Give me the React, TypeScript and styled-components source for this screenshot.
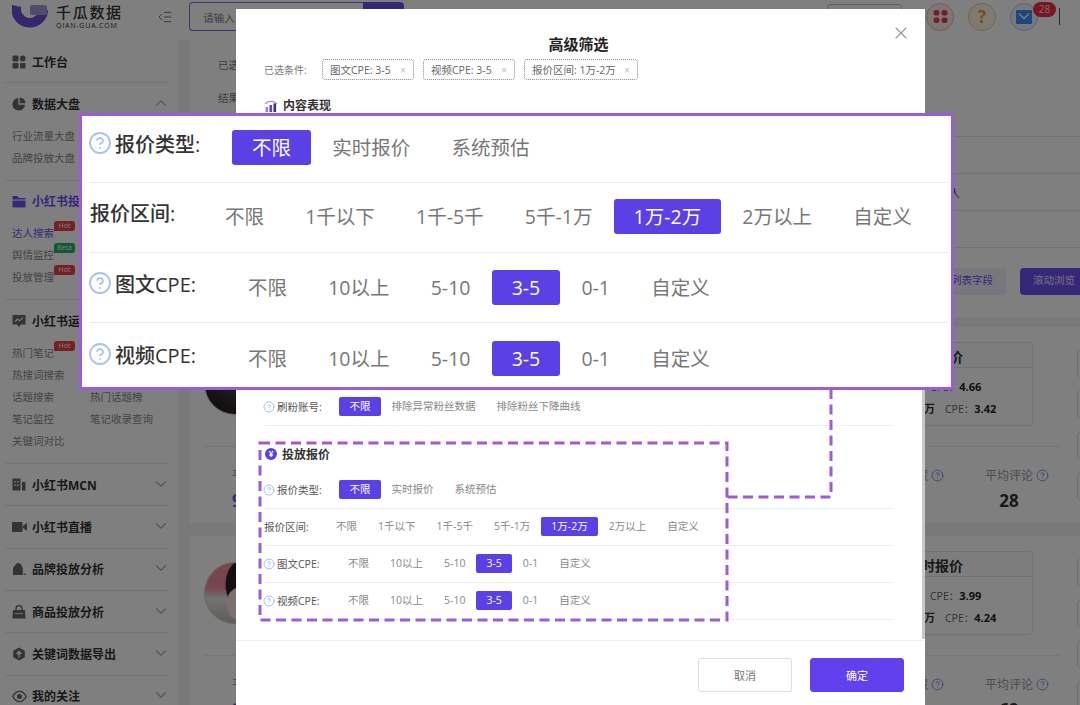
import React from 'react'
import styled, { createGlobalStyle } from 'styled-components'
import { ChevronDown, ChevronUp, CircleHelp, IndentDecrease, X } from 'lucide-react'

const PURPLE = '#5b40e6'
const ACCENT = '#9a5dd5'

const GlobalStyle = createGlobalStyle`
  html, body {
    margin: 0;
    padding: 0;
    background: #f2f2f2;
    overflow: hidden;
  }
  * {
    box-sizing: border-box;
  }
  body {
    font-family: "Open Sans", "Noto Sans CJK SC", sans-serif;
  }
`

const Page = styled.div`
  position: relative;
  width: 1080px;
  height: 705px;
  overflow: hidden;
  background: #f2f2f2;
`

/* header */
const Header = styled.header`
  display: flex;
  align-items: center;
  height: 40px;
  padding: 0 20px 7px 12px;
  background: #fff;
`

const LogoText = styled.div`
  display: flex;
  flex-direction: column;
  margin-left: 8px;
  color: #333;
`

const LogoName = styled.span`
  font-size: 15px;
  line-height: 17px;
  font-weight: 500;
  letter-spacing: 1.7px;
`

const LogoSub = styled.span`
  font-size: 7px;
  line-height: 9px;
  letter-spacing: 0.8px;
`

const MenuToggle = styled.span`
  display: flex;
  margin-left: 34.4px;
  color: #777;
`

const Search = styled.div`
  display: flex;
  width: 215px;
  height: 29px;
  margin-left: 16px;
`

const SearchInput = styled.div`
  flex: 1;
  padding: 7px 13px;
  font-size: 10.5px;
  color: #777;
  border: 1px solid #7a62ee;
  border-right: 0;
  border-radius: 4px 0 0 4px;
`

const SearchButton = styled.div`
  width: 41px;
  background: #6c4ef0;
  border-radius: 0 4px 4px 0;
`

const HeaderRight = styled.div`
  display: flex;
  align-items: center;
  gap: 14px;
  margin-left: auto;
`

const OutlineBox = styled.div`
  width: 75px;
  height: 25px;
  margin-right: 10px;
  border: 1px solid #bbb;
  border-radius: 4px;
`

const IconCircle = styled.div<{ $tint: string; $line: string }>`
  position: relative;
  display: flex;
  align-items: center;
  justify-content: center;
  width: 28px;
  height: 28px;
  border-radius: 50%;
  background: ${(p) => p.$tint};
  border: 1px solid ${(p) => p.$line};
`

const Question = styled.span`
  font-size: 17px;
  line-height: 1;
  font-weight: 700;
  color: #f39a2c;
`

const Badge = styled.span`
  position: absolute;
  top: -2px;
  left: 22px;
  width: 23px;
  height: 15px;
  border-radius: 8px;
  background: #ee2a40;
  color: #ffd9dd;
  font-size: 10px;
  line-height: 15px;
  text-align: center;
`

const HeaderRule = styled.span`
  width: 1px;
  height: 17px;
  margin-left: 7px;
  background: #555;
`

/* sidebar */
const Body = styled.div`
  display: flex;
  height: 665px;
`

const Sidebar = styled.aside`
  flex: 0 0 178px;
  padding: 1px 10px 0 5px;
  background: #fff;
`

const SideGroup = styled.section`
  border-bottom: 1px solid #e8e8e8;
`

const SideTitle = styled.div<{ $active?: boolean }>`
  display: flex;
  align-items: center;
  height: 41.3px;
  padding: 0 0 0 7px;
  font-size: 12px;
  font-weight: 700;
  color: ${(p) => (p.$active ? '#6c4ef0' : '#333')};
`

const SideIcon = styled.span`
  display: flex;
  width: 20px;
  color: #666;
`

const SideChevron = styled.span`
  display: flex;
  margin: -2px -2px 0 auto;
  color: #aaa;
`

const SideLinks = styled.div`
  display: grid;
  grid-template-columns: 78px 1fr;
  padding: 0 0 10.7px 7px;
`

const SideLink = styled.a<{ $active?: boolean; $full?: boolean }>`
  position: relative;
  grid-column: ${(p) => (p.$full ? '1 / 3' : 'auto')};
  height: 22.2px;
  font-size: 10.5px;
  line-height: 22px;
  white-space: nowrap;
  color: ${(p) => (p.$active ? '#6c4ef0' : '#888')};
`

const SideTag = styled.span<{ $color: string }>`
  position: absolute;
  left: 42px;
  top: -1px;
  width: 21px;
  height: 10px;
  border-radius: 3px 3px 3px 0;
  background: ${(p) => p.$color};
  color: #fff;
  font-size: 7px;
  line-height: 10px;
  text-align: center;
`

/* main list behind the dialog */
const Main = styled.main`
  flex: 1;
  min-width: 0;
  padding-left: 12px;
`

const FilterPanel = styled.div`
  height: 277px;
  margin-bottom: 10px;
  background: #fff;
`

const PanelRow = styled.div<{ $height: number }>`
  display: flex;
  align-items: center;
  height: ${(p) => p.$height}px;
  padding-left: 28px;
  font-size: 10.5px;
  color: #777;
`

const PanelLines = styled.div`
  margin-top: 30px;
  padding-left: 28px;
`

const PanelLine = styled.div`
  display: flex;
  justify-content: flex-end;
  height: 37px;
  padding-right: 120px;
  font-size: 11px;
  line-height: 40px;
  color: #444;
  border-top: 1px solid #e6e6e6;
`

const Toolbar = styled.div`
  display: flex;
  justify-content: flex-end;
  gap: 14px;
  padding-top: 20px;
  border-top: 1px solid #e6e6e6;
`

const ToolButton = styled.div<{ $primary?: boolean }>`
  width: ${(p) => (p.$primary ? '60px' : '66px')};
  height: 27px;
  padding-left: ${(p) => (p.$primary ? '13px' : '11px')};
  font-size: 10.5px;
  line-height: 25px;
  color: ${(p) => (p.$primary ? '#e6e0ff' : '#6c4ef0')};
  background: ${(p) => (p.$primary ? '#6c4ef0' : '#f0eefb')};
  border-radius: ${(p) => (p.$primary ? '4px 0 0 4px' : '4px')};
`

const Card = styled.article`
  display: flex;
  height: 196px;
  margin-bottom: 13px;
  padding: 16px 0 0 14px;
  background: #fff;
`

const CardBody = styled.div`
  flex: 0 0 856px;
`

const CardTop = styled.div`
  display: flex;
  align-items: center;
  justify-content: space-between;
  height: 104px;
  padding: 0 27px 21px 0;
  border-bottom: 1px solid #ececec;
`

const Avatar = styled.div<{ $girl?: boolean }>`
  width: 62px;
  height: 62px;
  border-radius: 50%;
  border: 1px solid #ccc;
  background: ${(p) =>
    p.$girl
      ? `radial-gradient(ellipse 14px 17px at 58% 68%, #f6e2d8 92%, transparent 100%),
         radial-gradient(ellipse 16px 25px at 60% 36%, #2a1f22 92%, transparent 100%),
         linear-gradient(180deg, #f08a9c 0 40%, #e4e6e0 60%, #bcbcb4 100%)`
      : `radial-gradient(circle at 60% 30%, #5a4a4c, #2a2226 70%)`};
`

const PriceBox = styled.div`
  width: 138px;
  height: 84px;
  border: 1px solid #e4e4e4;
  border-radius: 4px;
`

const PriceTitle = styled.div`
  height: 25px;
  padding-left: 11px;
  font-size: 14px;
  line-height: 27px;
  font-weight: 700;
  color: #333;
  background: #fafafa;
  border-bottom: 1px solid #e4e4e4;
  white-space: nowrap;
`

const PriceRows = styled.div`
  padding-top: 8px;
`

const PriceRow = styled.div`
  display: flex;
  height: 22px;
  padding-left: 11px;
  font-size: 10.5px;
  line-height: 22px;
  white-space: nowrap;
  color: #666;
`

const PriceAmount = styled.span<{ $width: number }>`
  width: ${(p) => p.$width}px;
  margin-right: 10px;
  font-size: 11px;
  font-weight: 700;
  color: #333;
  text-align: right;
`

const PriceValue = styled.b`
  font-size: 11px;
  color: #222;
`

const Stats = styled.div`
  display: flex;
  justify-content: space-between;
  padding: 20px 11px 0 28px;
`

const Stat = styled.div`
  display: flex;
  flex-direction: column;
`

const StatPair = styled.div`
  display: flex;
  gap: 41px;
`

const StatLabel = styled.div`
  display: flex;
  align-items: center;
  gap: 3px;
  height: 16px;
  font-size: 12px;
  color: #999;
  white-space: nowrap;
  svg {
    color: #5f87e8;
  }
`

const StatValue = styled.div<{ $accent?: boolean }>`
  padding-right: ${(p) => (p.$accent ? 0 : 16)}px;
  font-size: 17px;
  line-height: 25px;
  margin-top: 5px;
  font-weight: 700;
  text-align: ${(p) => (p.$accent ? 'left' : 'center')};
  color: ${(p) => (p.$accent ? '#6c4ef0' : '#333')};
`

const Actions = styled.div`
  display: flex;
  flex-direction: column;
  gap: 14px;
  margin: 7px 0 0 17px;
`

const ActionStub = styled.div`
  width: 60px;
  height: 27px;
  border: 1px solid #ddd;
  border-radius: 3px;
`

/* dimming layer and dialog */
const Overlay = styled.div`
  position: absolute;
  inset: 0;
  background: rgba(0, 0, 0, 0.5);
`

const Modal = styled.div`
  position: absolute;
  top: 9px;
  left: 236px;
  display: flex;
  flex-direction: column;
  width: 689px;
  height: 696px;
  background: #fff;
`

const CloseButton = styled.span`
  position: absolute;
  top: 14px;
  right: 14px;
  display: flex;
  color: #999;
`

const ModalScroll = styled.div`
  position: absolute;
  top: 200px;
  right: 0;
  width: 3px;
  height: 430px;
  background: #c8c8c8;
`

const ModalContent = styled.div`
  flex: 1;
  min-height: 0;
  padding: 25px 32px 0 28px;
`

const ModalTitle = styled.h2`
  margin: 0 0 5px;
  font-size: 15px;
  line-height: 20px;
  font-weight: 700;
  text-align: center;
  color: #222;
`

const SelectedRow = styled.div`
  display: flex;
  align-items: center;
  height: 21px;
  margin-bottom: 16px;
  font-size: 10px;
  color: #777;
`

const SelectedLabel = styled.span`
  width: 58px;
`

const SelectedTag = styled.span<{ $width: number }>`
  display: flex;
  align-items: center;
  justify-content: space-between;
  width: ${(p) => p.$width}px;
  height: 21px;
  margin-right: 9px;
  padding: 0 7px;
  font-size: 10.5px;
  color: #666;
  white-space: nowrap;
  border: 1px dotted #888;
  border-radius: 3px;
`

const TagClose = styled.span`
  font-size: 10px;
  color: #bbb;
`

const Section = styled.div<{ $height?: number }>`
  min-height: ${(p) => (p.$height ? `${p.$height}px` : 'auto')};
`

const SectionTitle = styled.h3<{ $top?: number }>`
  display: flex;
  align-items: center;
  gap: 5px;
  height: 18px;
  margin: ${(p) => p.$top ?? 0}px 0 ${(p) => (p.$top ? 9 : 0)}px;
  font-size: 12px;
  font-weight: 700;
  color: #333;
`

const YenDot = styled.span`
  width: 12px;
  height: 12px;
  margin-left: 1px;
  border-radius: 50%;
  background: ${PURPLE};
  color: #fff;
  font-size: 8px;
  line-height: 12px;
  text-align: center;
`

const FilterRow = styled.div`
  display: flex;
  align-items: center;
  height: 37px;
  padding-bottom: 1px;
  border-bottom: 1px solid #eee;
`

const FilterLabel = styled.div<{ $width: number }>`
  display: flex;
  align-items: center;
  gap: 2px;
  flex: 0 0 ${(p) => p.$width}px;
  font-size: 10.5px;
  color: #555;
  white-space: nowrap;
  svg {
    margin-left: -1px;
    color: #8fb0ea;
  }
`

const Options = styled.div`
  display: flex;
`

const Option = styled.span<{ $active?: boolean }>`
  height: 19px;
  padding: 0 10.5px;
  font-size: 10.5px;
  line-height: 19px;
  white-space: nowrap;
  border-radius: 2px;
  color: ${(p) => (p.$active ? '#fff' : '#888')};
  background: ${(p) => (p.$active ? PURPLE : 'transparent')};
`

const ModalFooter = styled.div`
  display: flex;
  justify-content: flex-end;
  gap: 18px;
  height: 65px;
  padding: 17px 21px 0 0;
  border-top: 1px solid #f0f0f0;
`

const FooterButton = styled.button<{ $primary?: boolean }>`
  width: 94px;
  height: 34px;
  padding: 0;
  font-family: inherit;
  font-size: 11px;
  border-radius: 3px;
  color: ${(p) => (p.$primary ? '#fff' : '#777')};
  background: ${(p) => (p.$primary ? '#6340ee' : '#fff')};
  border: 1px solid ${(p) => (p.$primary ? '#6340ee' : '#ddd')};
`

/* annotations drawn over the dialog */
const DashMark = styled.svg<{ $left: number; $top: number }>`
  position: absolute;
  left: ${(p) => p.$left}px;
  top: ${(p) => p.$top}px;
  overflow: visible;
  fill: none;
  stroke: ${ACCENT};
  stroke-width: 3;
  stroke-dasharray: 10 5.5;
`

const Callout = styled.div`
  position: absolute;
  left: 79px;
  top: 113px;
  width: 875px;
  height: 277px;
  padding: 0 3px 0 8px;
  background: #fff;
  border: 3px solid ${ACCENT};
`

const CalloutRow = styled.div<{ $top: number; $height: number; $last?: boolean }>`
  display: flex;
  align-items: flex-start;
  height: ${(p) => p.$height}px;
  padding-top: ${(p) => p.$top}px;
  border-bottom: ${(p) => (p.$last ? '0' : '1px solid #ececec')};
`

const CalloutLabel = styled.div<{ $width: number }>`
  display: flex;
  align-items: center;
  gap: 3px;
  flex: 0 0 ${(p) => p.$width}px;
  height: 26px;
  font-size: 20px;
  font-weight: 500;
  color: #333;
  white-space: nowrap;
  svg {
    margin-left: -2px;
    color: #a9c0f0;
  }
`

const CalloutOptions = styled.div`
  display: flex;
  gap: 1.2px;
`

const CalloutOption = styled.span<{ $active?: boolean }>`
  height: 35px;
  padding: 0 20px;
  font-size: 19.5px;
  line-height: 36px;
  white-space: nowrap;
  border-radius: 3px;
  color: ${(p) => (p.$active ? '#fff' : '#777')};
  background: ${(p) => (p.$active ? PURPLE : 'transparent')};
`

const LogoMark = () => (
  <svg width="36" height="32" viewBox="0 0 36 32">
    <path d="M4.6 5 A13.6 13.6 0 1 0 31.4 9" fill="none" stroke="#6f4cd8" strokeWidth="9.5" />
    <rect x="18" y="4" width="17" height="10" rx="2" fill="#a596e0" />
  </svg>
)

const GridDots = () => (
  <svg width="15" height="15" viewBox="0 0 15 15" fill="#e23a4c">
    <rect x="0.5" y="1" width="6" height="5.5" rx="2.5" />
    <rect x="8.5" y="1" width="6" height="5.5" rx="2.5" />
    <rect x="0.5" y="8.5" width="6" height="5.5" rx="2.5" />
    <rect x="8.5" y="8.5" width="6" height="5.5" rx="2.5" />
  </svg>
)

const Mail = () => (
  <svg width="16" height="14" viewBox="0 0 16 14">
    <rect width="16" height="14" rx="1" fill="#3a8cff" />
    <path d="M3 3.5 L8 8.5 L13 3.5" fill="none" stroke="#e6f0ff" strokeWidth="1.6" />
  </svg>
)

const icons: Record<string, React.ReactNode> = {
  desk: (
    <svg width="14" height="14" viewBox="0 0 14 14" fill="currentColor">
      <rect x="0.5" y="0.5" width="6" height="6" rx="1" />
      <rect x="8" y="0.5" width="5.5" height="6" rx="2.7" />
      <rect x="0.5" y="8" width="6" height="5.5" rx="1" />
      <rect x="8" y="8" width="5.5" height="5.5" rx="1" />
    </svg>
  ),
  pie: (
    <svg width="14" height="14" viewBox="0 0 14 14" fill="currentColor">
      <path d="M6.3 1 A6.3 6.3 0 1 0 13 7.7 H6.3 Z" />
      <path d="M7.7 0.5 A6 6 0 0 1 13.5 6.3 H7.7 Z" />
    </svg>
  ),
  folder: (
    <svg width="14" height="13" viewBox="0 0 14 13" fill="#6c4ef0">
      <path d="M0.5 1 H5.5 L7 3 H13.5 V4.6 H0.5 Z" />
      <path d="M0.5 5.6 H13.5 V12.4 H0.5 Z" />
    </svg>
  ),
  chat: (
    <svg width="14" height="14" viewBox="0 0 14 14">
      <path d="M0.5 1 H13.5 V10.6 H9 L7 13 L5 10.6 H0.5 Z" fill="currentColor" />
      <path d="M3 7.6 L5.6 5 L7.6 6.8 L11 3.6" fill="none" stroke="#fff" strokeWidth="1.1" />
    </svg>
  ),
  mcn: (
    <svg width="14" height="13" viewBox="0 0 14 13" fill="currentColor">
      <path d="M0.5 0.5 H8.5 V12.5 H0.5 Z M2.4 3 V4.6 H3.8 V3 Z M5 3 V4.6 H6.5 V3 Z M2.4 6.4 V8 H3.8 V6.4 Z M5 6.4 V8 H6.5 V6.4 Z" fillRule="evenodd" />
      <rect x="10" y="4" width="3.5" height="8.5" />
    </svg>
  ),
  video: (
    <svg width="15" height="12" viewBox="0 0 15 12" fill="currentColor">
      <rect x="0" y="1" width="10.5" height="10" rx="1" />
      <path d="M11 5 L15 2 V10 L11 7 Z" />
    </svg>
  ),
  brand: (
    <svg width="14" height="14" viewBox="0 0 14 14" fill="currentColor">
      <path d="M1 13 V6 L3 3.5 A3.4 3.4 0 0 1 9.6 3.5 L10.8 6 V13 Z" />
      <rect x="11.8" y="11.6" width="1.8" height="1.4" />
    </svg>
  ),
  goods: (
    <svg width="14" height="14" viewBox="0 0 14 14">
      <path d="M1 5 H13 L13.5 13.4 H0.5 Z" fill="currentColor" />
      <path d="M4 6 V3.6 A3 3 0 0 1 10 3.6 V6" fill="none" stroke="currentColor" strokeWidth="1.3" />
      <path d="M3 8.6 H11" stroke="#fff" strokeWidth="0.8" />
    </svg>
  ),
  upload: (
    <svg width="14" height="14" viewBox="0 0 14 14">
      <path d="M7 0.5 L12.8 3.8 V10.2 L7 13.5 L1.2 10.2 V3.8 Z" fill="currentColor" />
      <path d="M7 10.4 V5 M4.6 7 L7 4.6 L9.4 7" fill="none" stroke="#fff" strokeWidth="1.4" />
    </svg>
  ),
  eye: (
    <svg width="15" height="13" viewBox="0 0 15 13">
      <path d="M0.8 6.5 C3 2.4 5.2 1.4 7.5 1.4 S12 2.4 14.2 6.5 C12 10.6 9.8 11.6 7.5 11.6 S3 10.6 0.8 6.5 Z" fill="none" stroke="currentColor" strokeWidth="1.4" />
      <circle cx="7.5" cy="6.5" r="2.5" fill="currentColor" />
    </svg>
  ),
}

const ContentIcon = () => (
  <svg width="14" height="13" viewBox="0 0 14 13">
    <path d="M1 5 A8 8 0 0 1 13 5" fill="none" stroke="#7f7fe0" strokeWidth="1.1" />
    <rect x="1.5" y="8" width="2.6" height="5" fill="#8a8ae8" />
    <rect x="5.5" y="6" width="2.6" height="7" fill={PURPLE} />
    <rect x="9.5" y="4.5" width="2.6" height="8.5" fill="#3d2a9a" />
  </svg>
)

type SideEntry = { name: string; active?: boolean; tag?: 'Hot' | 'Beta'; full?: boolean }
type SideSection = { icon: string; title: string; active?: boolean; open?: boolean; links?: SideEntry[] }

const sideSections: SideSection[] = [
  { icon: 'desk', title: '工作台' },
  {
    icon: 'pie',
    title: '数据大盘',
    open: true,
    links: [
      { name: '行业流量大盘', full: true },
      { name: '品牌投放大盘', full: true },
    ],
  },
  {
    icon: 'folder',
    title: '小红书投放',
    active: true,
    open: true,
    links: [
      { name: '达人搜索', active: true, tag: 'Hot', full: true },
      { name: '舆情监控', tag: 'Beta', full: true },
      { name: '投放管理', tag: 'Hot', full: true },
    ],
  },
  {
    icon: 'chat',
    title: '小红书运营',
    open: true,
    links: [
      { name: '热门笔记', tag: 'Hot', full: true },
      { name: '热搜词搜索', full: true },
      { name: '话题搜索' },
      { name: '热门话题榜' },
      { name: '笔记监控' },
      { name: '笔记收录查询' },
      { name: '关键词对比', full: true },
    ],
  },
  { icon: 'mcn', title: '小红书MCN' },
  { icon: 'video', title: '小红书直播' },
  { icon: 'brand', title: '品牌投放分析' },
  { icon: 'goods', title: '商品投放分析' },
  { icon: 'upload', title: '关键词数据导出' },
  { icon: 'eye', title: '我的关注' },
]

const tagColor = { Hot: '#e8404a', Beta: '#22b060' }

type FilterOption = { text: string; active?: boolean }
const opts = (list: string[], active: string): FilterOption[] =>
  list.map((text) => ({ text, active: text === active }))

const priceTypes = opts(['不限', '实时报价', '系统预估'], '不限')
const priceRanges = opts(['不限', '1千以下', '1千-5千', '5千-1万', '1万-2万', '2万以上', '自定义'], '1万-2万')
const cpeOptions = opts(['不限', '10以上', '5-10', '3-5', '0-1', '自定义'], '3-5')

const filterRows = [
  { label: '报价类型:', help: true, start: 75, options: priceTypes },
  { label: '报价区间:', help: false, start: 61.5, options: priceRanges },
  { label: '图文CPE:', help: true, start: 73.5, options: cpeOptions },
  { label: '视频CPE:', help: true, start: 73.5, options: cpeOptions },
]

const calloutRows = [
  { ...filterRows[0], start: 142, top: 14, height: 67 },
  { ...filterRows[1], start: 115, top: 16, height: 70 },
  { ...filterRows[2], start: 138, top: 17, height: 70 },
  { ...filterRows[3], start: 138, top: 18, height: 64 },
]

const people = [
  { girl: false, title: '实时报价', first: '4.66', second: '3.42', comments: '28' },
  { girl: true, title: '实时报价', first: '3.99', second: '4.24', comments: '69' },
]

const App = () => (
  <Page>
    <GlobalStyle />
    <Header>
      <LogoMark />
      <LogoText>
        <LogoName>千瓜数据</LogoName>
        <LogoSub>QIAN-GUA.COM</LogoSub>
      </LogoText>
      <MenuToggle>
        <IndentDecrease size={16} strokeWidth={1.5} />
      </MenuToggle>
      <Search>
        <SearchInput>请输入</SearchInput>
        <SearchButton />
      </Search>
      <HeaderRight>
        <OutlineBox />
        <IconCircle $tint="#fdecec" $line="#f0b0b0">
          <GridDots />
        </IconCircle>
        <IconCircle $tint="#fff6e8" $line="#f2c890">
          <Question>?</Question>
        </IconCircle>
        <IconCircle $tint="#edf4ff" $line="#b0c8ea">
          <Mail />
          <Badge>28</Badge>
        </IconCircle>
        <HeaderRule />
      </HeaderRight>
    </Header>

    <Body>
      <Sidebar>
        {sideSections.map((section) => (
          <SideGroup key={section.title}>
            <SideTitle $active={section.active}>
              <SideIcon>{icons[section.icon]}</SideIcon>
              {section.title}
              {section.icon !== 'desk' && (
                <SideChevron>
                  {section.open ? (
                    <ChevronUp size={18} strokeWidth={1.5} />
                  ) : (
                    <ChevronDown size={18} strokeWidth={1.5} />
                  )}
                </SideChevron>
              )}
            </SideTitle>
            {section.links && (
              <SideLinks>
                {section.links.map((link) => (
                  <SideLink key={link.name} $active={link.active} $full={link.full}>
                    {link.name}
                    {link.tag && <SideTag $color={tagColor[link.tag]}>{link.tag}</SideTag>}
                  </SideLink>
                ))}
              </SideLinks>
            )}
          </SideGroup>
        ))}
      </Sidebar>

      <Main>
        <FilterPanel>
          <PanelRow $height={48}>已选</PanelRow>
          <PanelRow $height={18}>结果</PanelRow>
          <PanelLines>
            <PanelLine />
            <PanelLine>人</PanelLine>
            <PanelLine />
            <Toolbar>
              <ToolButton>列表字段</ToolButton>
              <ToolButton $primary>滚动浏览</ToolButton>
            </Toolbar>
          </PanelLines>
        </FilterPanel>
        {people.map((person) => (
          <Card key={person.first}>
            <CardBody>
              <CardTop>
                <Avatar $girl={person.girl} />
                <PriceBox>
                  <PriceTitle>{person.title}</PriceTitle>
                  <PriceRows>
                    <PriceRow>
                      <PriceAmount $width={13} />
                      CPE：<PriceValue>{person.first}</PriceValue>
                    </PriceRow>
                    <PriceRow>
                      <PriceAmount $width={28}>万</PriceAmount>
                      CPE：<PriceValue>{person.second}</PriceValue>
                    </PriceRow>
                  </PriceRows>
                </PriceBox>
              </CardTop>
              <Stats>
                <Stat>
                  <StatLabel>平均</StatLabel>
                  <StatValue $accent>9</StatValue>
                </Stat>
                <StatPair>
                  <Stat>
                    <StatLabel>
                      平均收藏
                      <CircleHelp size={13} strokeWidth={1.6} />
                    </StatLabel>
                  </Stat>
                  <Stat>
                    <StatLabel>
                      平均评论
                      <CircleHelp size={13} strokeWidth={1.6} />
                    </StatLabel>
                    <StatValue>{person.comments}</StatValue>
                  </Stat>
                </StatPair>
              </Stats>
            </CardBody>
            <Actions>
              <ActionStub />
              <ActionStub />
              <ActionStub />
              <ActionStub />
            </Actions>
          </Card>
        ))}
      </Main>
    </Body>

    <Overlay />

    <Modal>
      <CloseButton>
        <X size={20} strokeWidth={1.4} />
      </CloseButton>
      <ModalScroll />
      <ModalContent>
        <ModalTitle>高级筛选</ModalTitle>
        <SelectedRow>
          <SelectedLabel>已选条件:</SelectedLabel>
          <SelectedTag $width={92}>
            图文CPE: 3-5<TagClose>×</TagClose>
          </SelectedTag>
          <SelectedTag $width={92}>
            视频CPE: 3-5<TagClose>×</TagClose>
          </SelectedTag>
          <SelectedTag $width={114}>
            报价区间: 1万-2万<TagClose>×</TagClose>
          </SelectedTag>
        </SelectedRow>
        <Section $height={293}>
          <SectionTitle>
            <ContentIcon />
            内容表现
          </SectionTitle>
        </Section>
        <FilterRow>
          <FilterLabel $width={75}>
            <CircleHelp size={12} strokeWidth={1.6} />
            刷粉账号:
          </FilterLabel>
          <Options>
            <Option $active>不限</Option>
            <Option>排除异常粉丝数据</Option>
            <Option>排除粉丝下降曲线</Option>
          </Options>
        </FilterRow>
        <SectionTitle $top={19}>
          <YenDot>¥</YenDot>
          投放报价
        </SectionTitle>
        {filterRows.map((row) => (
          <FilterRow key={row.label}>
            <FilterLabel $width={row.start}>
              {row.help && <CircleHelp size={12} strokeWidth={1.6} />}
              {row.label}
            </FilterLabel>
            <Options>
              {row.options.map((option) => (
                <Option key={option.text} $active={option.active}>
                  {option.text}
                </Option>
              ))}
            </Options>
          </FilterRow>
        ))}
      </ModalContent>
      <ModalFooter>
        <FooterButton>取消</FooterButton>
        <FooterButton $primary>确定</FooterButton>
      </ModalFooter>
    </Modal>

    <DashMark $left={260} $top={443} width="467" height="177">
      <rect width="467" height="177" />
    </DashMark>
    <DashMark $left={727} $top={389} width="104" height="108">
      <path d="M104 0 V108 H0" />
    </DashMark>

    <Callout>
      {calloutRows.map((row, index) => (
        <CalloutRow key={row.label} $top={row.top} $height={row.height} $last={index === calloutRows.length - 1}>
          <CalloutLabel $width={row.start}>
            {row.help && <CircleHelp size={24} strokeWidth={1.8} />}
            {row.label}
          </CalloutLabel>
          <CalloutOptions>
            {row.options.map((option) => (
              <CalloutOption key={option.text} $active={option.active}>
                {option.text}
              </CalloutOption>
            ))}
          </CalloutOptions>
        </CalloutRow>
      ))}
    </Callout>
  </Page>
)

export default App
